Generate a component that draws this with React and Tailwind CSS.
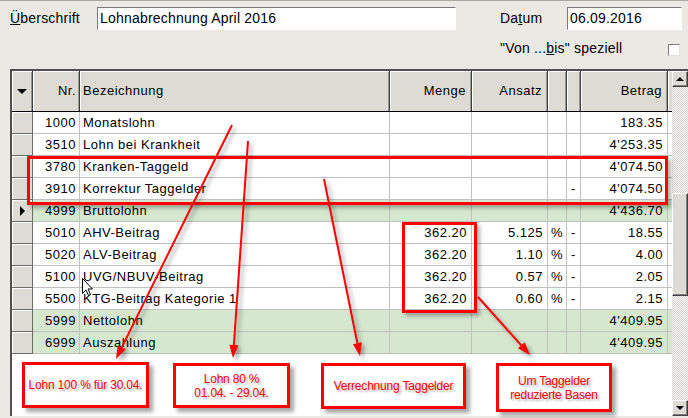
import React from "react";

const cols = "grid grid-cols-[21px_47px_310px_82px_76px_19px_14px_87px_4px]";

const rows = [
  { nr: "1000", text: "Monatslohn", betrag: "183.35" },
  { nr: "3510", text: "Lohn bei Krankheit", betrag: "4'253.35" },
  { nr: "3780", text: "Kranken-Taggeld", betrag: "4'074.50" },
  { nr: "3910", text: "Korrektur Taggelder", minus: true, betrag: "4'074.50" },
  { nr: "4999", text: "Bruttolohn", betrag: "4'436.70", green: true, current: true },
  { nr: "5010", text: "AHV-Beitrag", menge: "362.20", ansatz: "5.125", pct: true, minus: true, betrag: "18.55" },
  { nr: "5020", text: "ALV-Beitrag", menge: "362.20", ansatz: "1.10", pct: true, minus: true, betrag: "4.00" },
  { nr: "5100", text: "UVG/NBUV-Beitrag", menge: "362.20", ansatz: "0.57", pct: true, minus: true, betrag: "2.05" },
  { nr: "5500", text: "KTG-Beitrag Kategorie 1", menge: "362.20", ansatz: "0.60", pct: true, minus: true, betrag: "2.15" },
  { nr: "5999", text: "Nettolohn", betrag: "4'409.95", green: true },
  { nr: "6999", text: "Auszahlung", betrag: "4'409.95", green: true },
];

// red callout arrows: line plus filled head at the tip
function Arrow({ x1, y1, x2, y2 }) {
  const dx = x2 - x1;
  const dy = y2 - y1;
  const len = Math.hypot(dx, dy);
  const ux = dx / len;
  const uy = dy / len;
  const bx = x2 - ux * 13;
  const by = y2 - uy * 13;
  const px = -uy * 4.5;
  const py = ux * 4.5;
  return (
    <g>
      <line x1={x1} y1={y1} x2={bx} y2={by} stroke="#ff0000" strokeWidth="2" />
      <polygon points={`${x2},${y2} ${bx + px},${by + py} ${bx - px},${by - py}`} fill="#ff0000" />
    </g>
  );
}

function Cell({ children, className = "" }) {
  return (
    <div className={`border-r border-b border-[#c0c0c0] flex items-center px-[4px] whitespace-nowrap ${className}`}>
      {children}
    </div>
  );
}

function HeadCell({ children, className = "" }) {
  return (
    <div
      className={`bg-[#dedbd5] border-r border-[#404040] shadow-[inset_1px_1px_0_#ffffff,inset_-1px_0_0_#9a9892] flex items-center px-[5px] ${className}`}
    >
      {children}
    </div>
  );
}

function ScrollButton({ up }) {
  return (
    <div className="h-[16px] bg-[#dedbd5] border border-t-white border-l-white border-r-[#404040] border-b-[#404040] shadow-[inset_-1px_-1px_0_#808080] flex items-center justify-center">
      <div
        className={
          up
            ? "w-0 h-0 border-l-[4px] border-r-[4px] border-b-[4px] border-l-transparent border-r-transparent border-b-black"
            : "w-0 h-0 border-l-[4px] border-r-[4px] border-t-[4px] border-l-transparent border-r-transparent border-t-black"
        }
      />
    </div>
  );
}

function Callout({ className, children }) {
  return (
    <div
      className={`absolute bg-white border-[3px] border-[#ff0000] shadow-[4px_4px_4px_rgba(0,0,0,0.35)] flex flex-col items-center justify-center text-[#ff0000] text-[12px] leading-[14px] tracking-[-0.2px] [text-shadow:2px_2px_2px_rgba(0,0,0,0.3)] ${className}`}
    >
      {children}
    </div>
  );
}

export default function App() {
  const checker =
    "bg-[repeating-conic-gradient(#d4d0c8_0_25%,#ffffff_0_50%)] bg-[length:2px_2px]";

  return (
    <div className="w-[688px] h-[418px] bg-[#ece9e4] relative overflow-hidden border-t border-[#aaa7a0] font-['Liberation_Sans',Arial,sans-serif] text-black">
      {/* header fields */}
      <div className="flex items-center h-[23px] mt-[6px] text-[14px] tracking-[0.2px]">
        <div className="w-[97px] pl-[10px]">
          <span className="underline">Ü</span>berschrift
        </div>
        <div className="w-[359px] h-[23px] bg-white border border-t-[#7a7a7a] border-l-[#7a7a7a] border-r-white border-b-white flex items-center pl-[2px]">
          Lohnabrechnung April 2016
        </div>
        <div className="w-[67px] ml-[44px]">
          Da<span className="underline">t</span>um
        </div>
        <div className="w-[115px] h-[23px] bg-white border border-t-[#7a7a7a] border-l-[#7a7a7a] border-r-white border-b-white flex items-center pl-[2px]">
          06.09.2016
        </div>
      </div>
      <div className="flex items-center h-[17px] mt-[10px] text-[14px] tracking-[0.2px]">
        <div className="ml-[500px] w-[168px]">
          "Von ...<span className="underline">b</span>is" speziell
        </div>
        <div className="w-[12px] h-[12px] bg-white border border-t-[#7a7a7a] border-l-[#7a7a7a] border-r-[#e0e0e0] border-b-[#e0e0e0] mt-[2px]" />
      </div>

      {/* grid */}
      <div className="mt-[12px] ml-[10px] w-[678px] h-[347px] flex border-l-2 border-t-2 border-[#505050] text-[13px] tracking-[0.5px]">
        <div className="w-[660px] flex flex-col">
          <div className={`${cols} h-[41px] border-b border-black`}>
            <HeadCell className="justify-center">
              <div className="w-0 h-0 border-l-[5px] border-r-[5px] border-t-[5px] border-l-transparent border-r-transparent border-t-black" />
            </HeadCell>
            <HeadCell className="justify-end !px-[3px]">Nr.</HeadCell>
            <HeadCell className="!px-[3px]">Bezeichnung</HeadCell>
            <HeadCell className="justify-end">Menge</HeadCell>
            <HeadCell className="justify-end">Ansatz</HeadCell>
            <HeadCell />
            <HeadCell />
            <HeadCell className="justify-end">Betrag</HeadCell>
            <HeadCell />
          </div>

          {rows.map((r) => (
            <div key={r.nr} className={`${cols} h-[22px] ${r.green ? "bg-[#d6e7cf]" : "bg-white"}`}>
              <div className="bg-[#dedbd5] border-r border-b border-[#6e6c68] shadow-[inset_1px_1px_0_#ffffff] flex items-center justify-center">
                {r.current && (
                  <div className="w-0 h-0 border-t-[5px] border-b-[5px] border-l-[5px] border-t-transparent border-b-transparent border-l-black" />
                )}
              </div>
              <Cell className="justify-end !px-[3px]">{r.nr}</Cell>
              <Cell className="!px-[3px]">{r.text}</Cell>
              <Cell className="justify-end">{r.menge}</Cell>
              <Cell className="justify-end">{r.ansatz}</Cell>
              <Cell className="!px-[3px]">{r.pct ? "%" : ""}</Cell>
              <Cell className="!px-[4px]">{r.minus ? "-" : ""}</Cell>
              <Cell className="justify-end">{r.betrag}</Cell>
              <div className="border-b border-[#c0c0c0]" />
            </div>
          ))}
          <div className="flex-1 bg-white" />
        </div>

        {/* vertical scrollbar */}
        <div className="w-[16px] flex flex-col">
          <ScrollButton up />
          <div className={`h-[106px] ${checker}`} />
          <div className="h-[103px] bg-[#dedbd5] border border-t-white border-l-white border-r-[#404040] border-b-[#404040] shadow-[inset_-1px_-1px_0_#808080]" />
          <div className={`flex-1 ${checker}`} />
          <ScrollButton />
        </div>
      </div>

      {/* annotations */}
      <div className="absolute left-[27px] top-[155px] w-[641px] h-[49px] border-[3px] border-[#ff0000] shadow-[3px_3px_4px_rgba(0,0,0,0.3)]" />
      <div className="absolute left-[402px] top-[221px] w-[75px] h-[91px] border-[3px] border-[#ff0000] shadow-[3px_3px_4px_rgba(0,0,0,0.3)]" />

      <svg
        className="absolute left-0 top-0 pointer-events-none drop-shadow-[3px_3px_2px_rgba(0,0,0,0.35)]"
        width="688"
        height="418"
      >
        <Arrow x1={232} y1={124} x2={116} y2={358} />
        <Arrow x1={248} y1={140} x2={233} y2={357} />
        <Arrow x1={324} y1={178} x2={360} y2={355} />
        <Arrow x1={478} y1={296} x2={530} y2={354} />
      </svg>

      <Callout className="left-[22px] top-[361px] w-[127px] h-[46px]">Lohn 100 % für 30.04.</Callout>
      <Callout className="left-[173px] top-[362px] w-[117px] h-[45px]">
        <span>Lohn 80 %</span>
        <span>01.04. - 29.04.</span>
      </Callout>
      <Callout className="left-[321px] top-[362px] w-[145px] h-[46px]">Verrechnung Taggelder</Callout>
      <Callout className="left-[496px] top-[362px] w-[116px] h-[49px]">
        <span>Um Taggelder</span>
        <span>reduzierte Basen</span>
      </Callout>

      {/* mouse pointer */}
      <svg className="absolute left-[82px] top-[277px]" width="12" height="19" viewBox="0 0 12 19">
        <path d="M0.5 0.5 L0.5 15.5 L4 12 L6.5 17.5 L8.5 16.5 L6 11 L10.5 11 Z" fill="#ffffff" stroke="#000000" strokeWidth="1" />
      </svg>
    </div>
  );
}
